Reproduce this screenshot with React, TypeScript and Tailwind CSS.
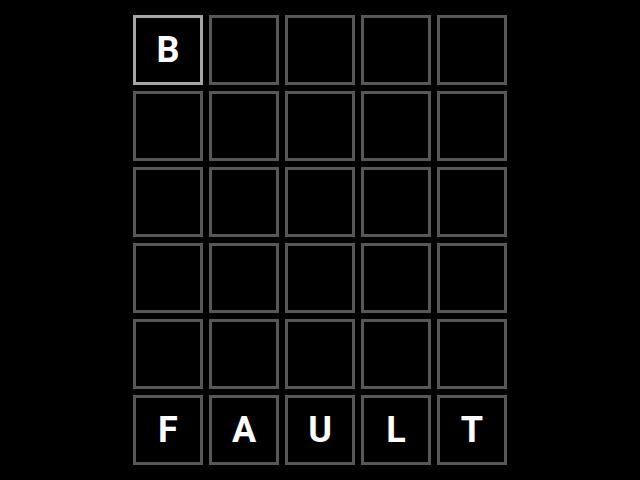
import React from "react";

const rows: string[][] = [
  ["B", "", "", "", ""],
  ["", "", "", "", ""],
  ["", "", "", "", ""],
  ["", "", "", "", ""],
  ["", "", "", "", ""],
  ["F", "A", "U", "L", "T"],
];

export default function App() {
  return (
    <div className="w-[640px] h-[480px] bg-black flex items-center justify-center" style={{ fontFamily: "Roboto, 'Liberation Sans', sans-serif" }}>
      <div className="grid grid-cols-5 gap-[6px]">
        {rows.map((row, r) =>
          row.map((ch, c) => {
            const active = r === 0 && c === 0;
            return (
              <div
                key={`${r}-${c}`}
                className={`w-[70px] h-[70px] border-[3px] flex items-center justify-center text-white font-bold text-[36px] leading-none ${active ? "border-[#a6a6a6]" : "border-[#575757]"}`}
              >
                {ch}
              </div>
            );
          })
        )}
      </div>
    </div>
  );
}
